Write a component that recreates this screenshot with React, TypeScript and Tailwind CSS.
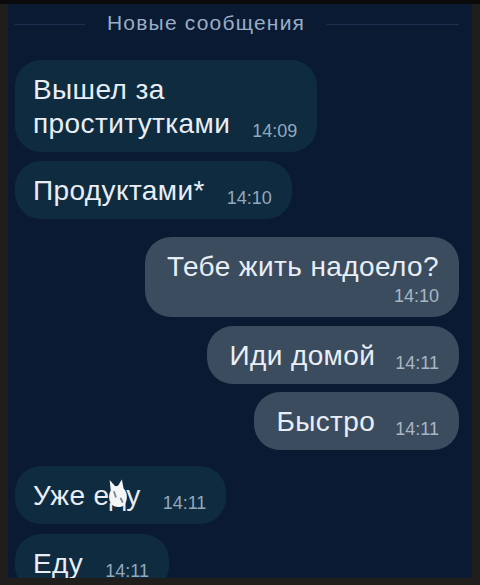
import type { ReactNode } from "react"

type Msg = {
    lines: ReactNode[]
    time: string
    out?: boolean
    below?: boolean
    space: string
}

function Doodle() {
    return (
        <span className="relative inline-block">
            д
            <svg
                className="absolute left-[-3px] top-[0px]"
                width="22"
                height="29"
                viewBox="0 0 18 26"
            >
                <path
                    d="M2.5 10 L1.5 1 L6.5 6.5 L9 6 L12.5 0.5 L14 8.5 C17.5 11.5 18 18.5 15 23 C12 26 5.5 26 2.5 22 C0.5 18 0.5 13.5 2.5 10 Z"
                    fill="#f3f5f7"
                />
                <path d="M5.5 11.5 L7 16" stroke="#7a8592" strokeWidth="1.6" strokeLinecap="round" />
                <path d="M11.5 17.5 L13 20.5" stroke="#7a8592" strokeWidth="1.6" strokeLinecap="round" />
            </svg>
        </span>
    )
}

const messages: Msg[] = [
    { lines: ["Вышел за", "проститутками"], time: "14:09", space: "mt-4" },
    { lines: ["Продуктами*"], time: "14:10", space: "mt-[9px]" },
    { lines: ["Тебе жить надоело?"], time: "14:10", out: true, below: true, space: "mt-[18px]" },
    { lines: ["Иди домой"], time: "14:11", out: true, space: "mt-[9px]" },
    { lines: ["Быстро"], time: "14:11", out: true, space: "mt-2" },
    { lines: [<>Уже е<Doodle />у</>], time: "14:11", space: "mt-4" },
    { lines: ["Еду"], time: "14:11", space: "mt-[10px]" },
]

function Bubble({ msg }: { msg: Msg }) {
    const text = (
        <div className="text-[28px] leading-[34px] tracking-[0.4px] text-[#e9eef4]">
            {msg.lines.map((line, i) => (
                <div key={i}>{line}</div>
            ))}
        </div>
    )

    return (
        <div className={`flex ${msg.out ? "justify-end" : "justify-start"} ${msg.space}`}>
            <div
                className={`rounded-[26px] pt-[13px] pb-[11px] ${
                    msg.out ? "bg-[#3b4c5f] pl-[22px] pr-5" : "bg-[#0f2b40] pl-[18px] pr-5"
                }`}
            >
                {msg.below ? (
                    <div className="flex flex-col">
                        {text}
                        <span className="mt-[2px] self-end text-[18px] leading-[20px] text-[#a9b6c4]">
                            {msg.time}
                        </span>
                    </div>
                ) : (
                    <div className={`flex items-end ${msg.out ? "gap-5" : "gap-[22px]"}`}>
                        {text}
                        <span
                            className={`text-[18px] leading-[20px] ${
                                msg.out ? "text-[#a9b6c4]" : "text-[#93a9bb]"
                            }`}
                        >
                            {msg.time}
                        </span>
                    </div>
                )}
            </div>
        </div>
    )
}

export default function App() {
    return (
        <div
            className="h-[585px] w-[480px] overflow-hidden border-t-4 border-[#0b0b0b] bg-[#1f1e1d] pb-[7px] pl-2 pr-2"
            style={{ fontFamily: '"Liberation Sans", Arial, sans-serif' }}
        >
            <div className="h-full overflow-hidden bg-[#0a1a33] pl-[7px] pr-[13px]">
                <div className="flex h-[40px] items-center">
                    <div className="h-px w-[70px] bg-[#1c3150]"></div>
                    <span className="mx-[22px] pb-[2px] text-[21px] tracking-[1.2px] text-[#98adc6]">
                        Новые сообщения
                    </span>
                    <div className="h-px flex-1 bg-[#1c3150]"></div>
                </div>
                {messages.map((msg, i) => (
                    <Bubble key={i} msg={msg} />
                ))}
            </div>
        </div>
    )
}
